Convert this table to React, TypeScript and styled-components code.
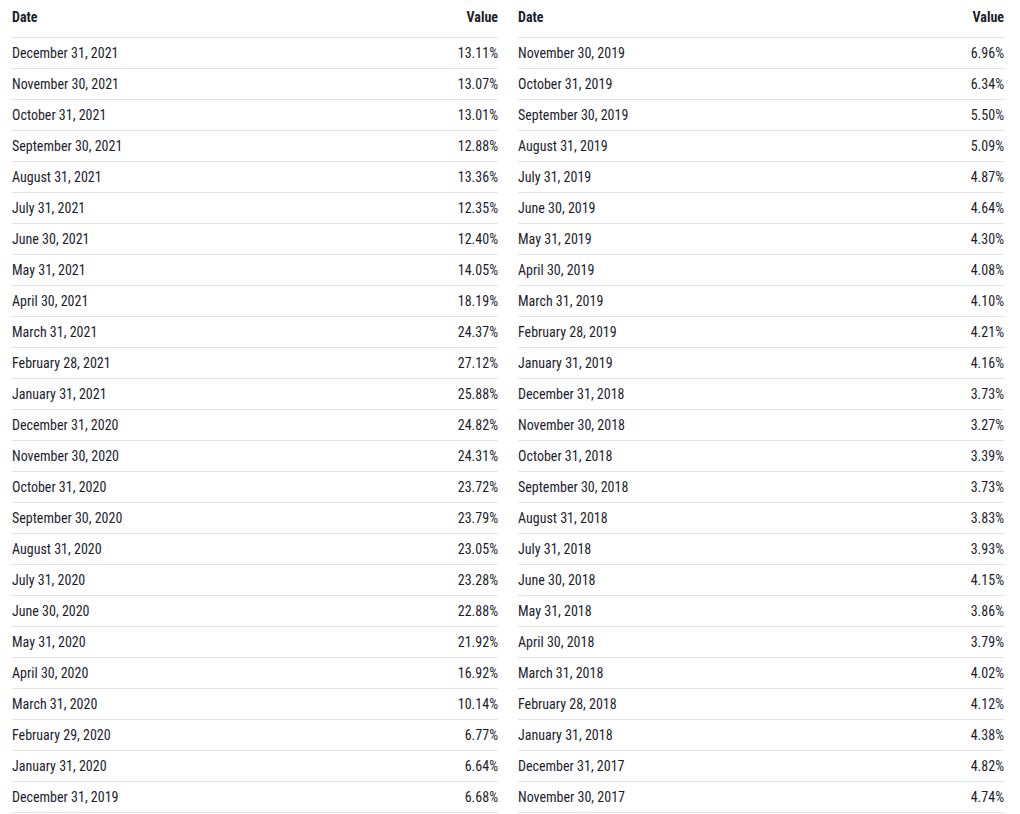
import React from "react";
import styled, { createGlobalStyle } from "styled-components";

const Global = createGlobalStyle`
  html, body { margin: 0; padding: 0; background: #fff; }
  body { font-family: Roboto, "Liberation Sans", sans-serif; font-stretch: 75%; color: #1c1d2b; }
`;

const left: [string, string][] = [
  ["December 31, 2021", "13.11%"],
  ["November 30, 2021", "13.07%"],
  ["October 31, 2021", "13.01%"],
  ["September 30, 2021", "12.88%"],
  ["August 31, 2021", "13.36%"],
  ["July 31, 2021", "12.35%"],
  ["June 30, 2021", "12.40%"],
  ["May 31, 2021", "14.05%"],
  ["April 30, 2021", "18.19%"],
  ["March 31, 2021", "24.37%"],
  ["February 28, 2021", "27.12%"],
  ["January 31, 2021", "25.88%"],
  ["December 31, 2020", "24.82%"],
  ["November 30, 2020", "24.31%"],
  ["October 31, 2020", "23.72%"],
  ["September 30, 2020", "23.79%"],
  ["August 31, 2020", "23.05%"],
  ["July 31, 2020", "23.28%"],
  ["June 30, 2020", "22.88%"],
  ["May 31, 2020", "21.92%"],
  ["April 30, 2020", "16.92%"],
  ["March 31, 2020", "10.14%"],
  ["February 29, 2020", "6.77%"],
  ["January 31, 2020", "6.64%"],
  ["December 31, 2019", "6.68%"],
];

const right: [string, string][] = [
  ["November 30, 2019", "6.96%"],
  ["October 31, 2019", "6.34%"],
  ["September 30, 2019", "5.50%"],
  ["August 31, 2019", "5.09%"],
  ["July 31, 2019", "4.87%"],
  ["June 30, 2019", "4.64%"],
  ["May 31, 2019", "4.30%"],
  ["April 30, 2019", "4.08%"],
  ["March 31, 2019", "4.10%"],
  ["February 28, 2019", "4.21%"],
  ["January 31, 2019", "4.16%"],
  ["December 31, 2018", "3.73%"],
  ["November 30, 2018", "3.27%"],
  ["October 31, 2018", "3.39%"],
  ["September 30, 2018", "3.73%"],
  ["August 31, 2018", "3.83%"],
  ["July 31, 2018", "3.93%"],
  ["June 30, 2018", "4.15%"],
  ["May 31, 2018", "3.86%"],
  ["April 30, 2018", "3.79%"],
  ["March 31, 2018", "4.02%"],
  ["February 28, 2018", "4.12%"],
  ["January 31, 2018", "4.38%"],
  ["December 31, 2017", "4.82%"],
  ["November 30, 2017", "4.74%"],
];

const Page = styled.div`
  display: grid;
  grid-template-columns: 1fr 1fr;
  column-gap: 20px;
  padding: 0 16px 0 12px;
`;

const Table = styled.div`
  display: flex;
  flex-direction: column;
`;

const Row = styled.div<{ $head?: boolean }>`
  display: flex;
  justify-content: space-between;
  align-items: center;
  box-sizing: border-box;
  height: ${(p) => (p.$head ? "38px" : "31px")};
  padding-bottom: ${(p) => (p.$head ? "3px" : "0")};
  border-bottom: 1px solid #e3e3e3;
  font-size: 14px;
  font-weight: ${(p) => (p.$head ? 700 : 400)};
`;

const Cell = styled.span`
  white-space: nowrap;
`;

function DataTable({ rows }: { rows: [string, string][] }) {
  return (
    <Table>
      <Row $head>
        <Cell>Date</Cell>
        <Cell>Value</Cell>
      </Row>
      {rows.map(([d, v]) => (
        <Row key={d}>
          <Cell>{d}</Cell>
          <Cell>{v}</Cell>
        </Row>
      ))}
    </Table>
  );
}

export default function App() {
  return (
    <>
      <Global />
      <Page>
        <DataTable rows={left} />
        <DataTable rows={right} />
      </Page>
    </>
  );
}
